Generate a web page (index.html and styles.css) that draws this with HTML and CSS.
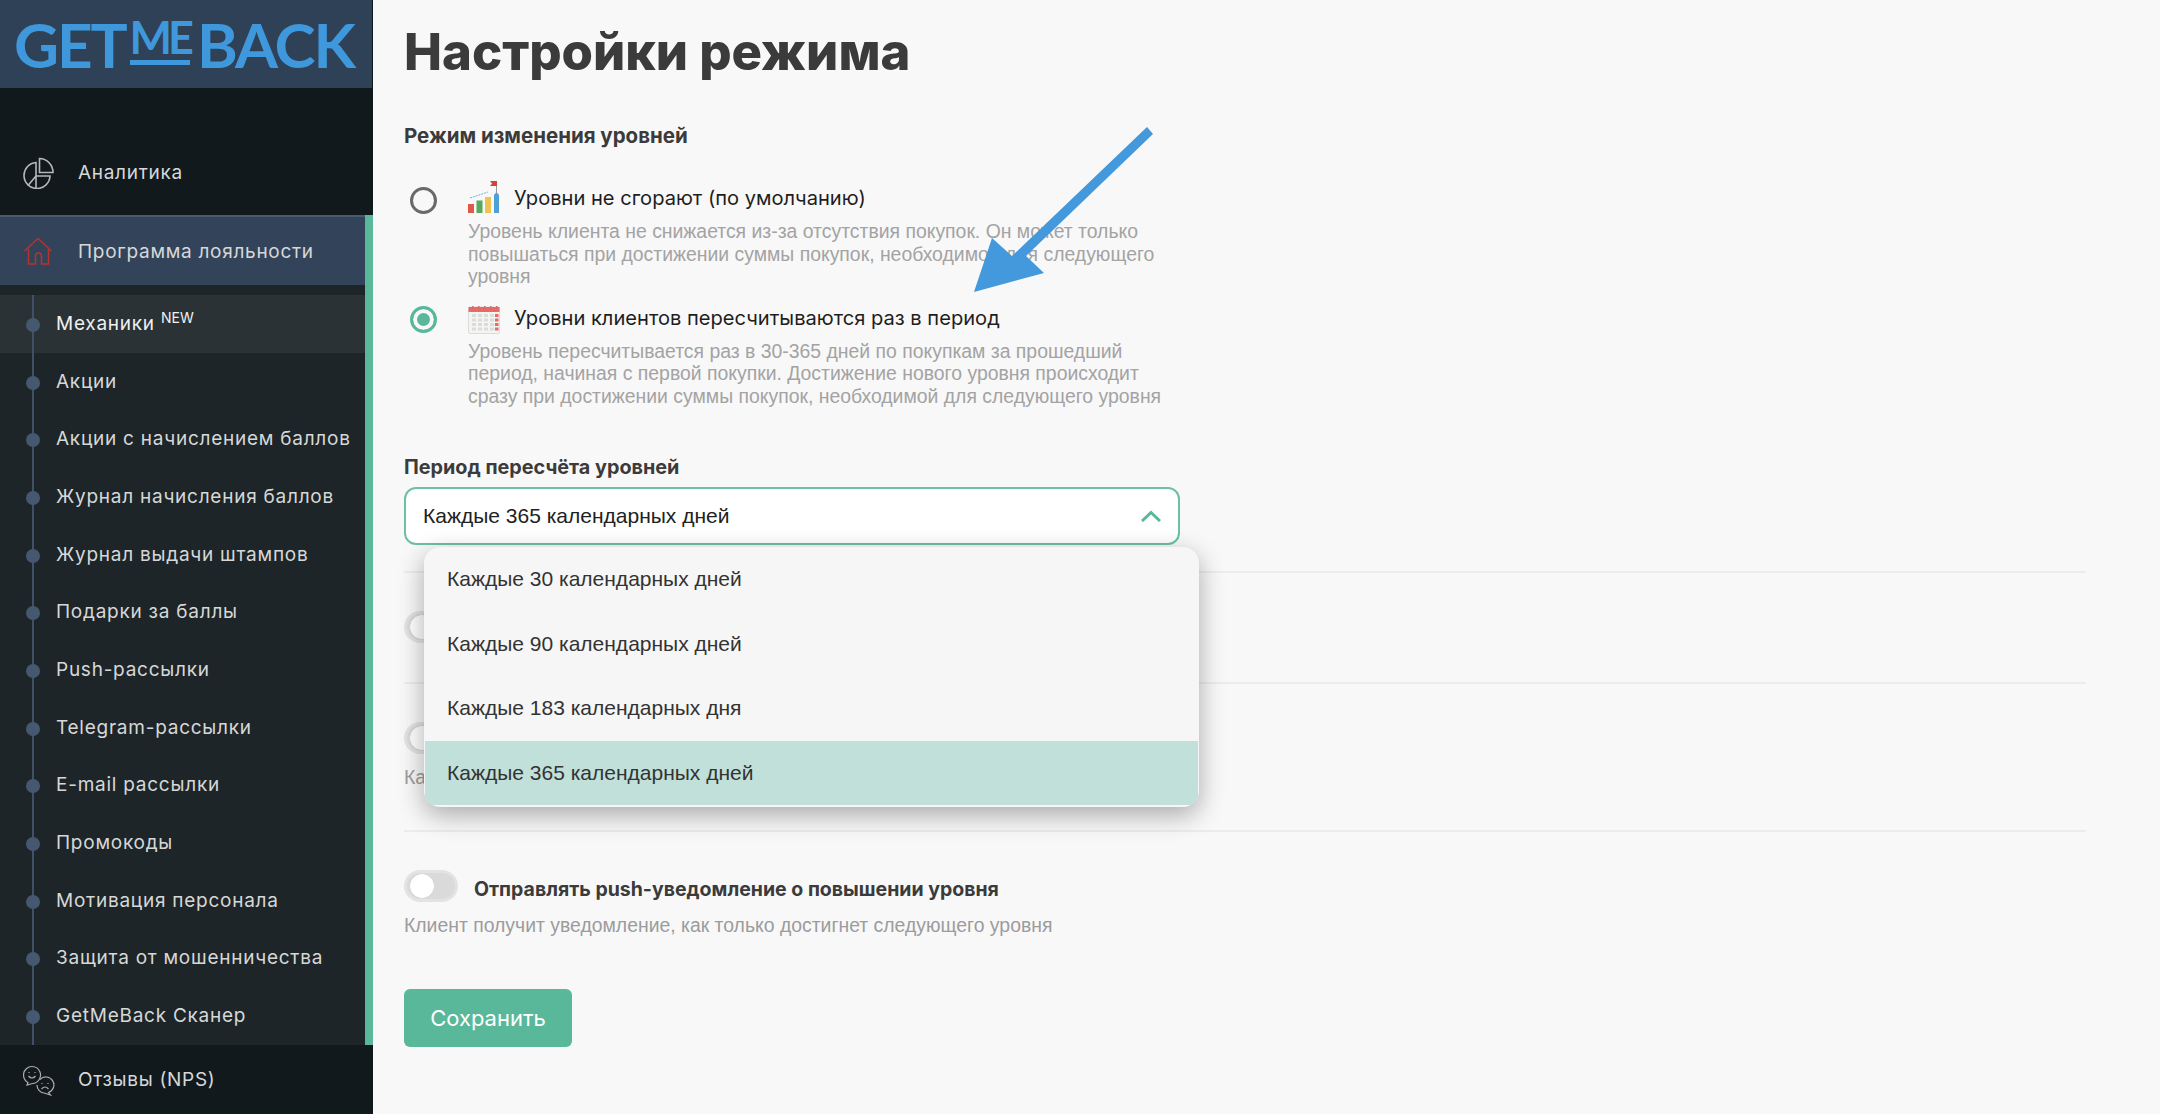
FILE: index.html
```html
<!DOCTYPE html>
<html lang="ru">
<head>
  <meta charset="UTF-8">
  <title>Настройки режима</title>
  <link rel="stylesheet" href="styles.css">
</head>
<body>
  <aside class="sidebar">
    <div class="logo">
      <span class="logo-big">GET</span>
      <span class="logo-me">ME</span>
      <span class="logo-big">BACK</span>
    </div>

    <a class="nav-item nav-first">
      <svg class="nav-icon" viewBox="0 0 32 32" fill="none" stroke="#b5b8b9" stroke-width="1.6">
        <path d="M16.5 1.5A14 14 0 0 1 30 15.5H16.5Z"/>
        <path d="M13 5.5A13 13 0 1 0 27 19H13Z"/>
        <path d="M13 19L5 28.5M13 19V31.5"/>
      </svg>
      <span>Аналитика</span>
    </a>

    <div class="nav-group">
      <a class="nav-item nav-active">
        <svg class="nav-icon" viewBox="0 0 32 32" fill="none" stroke="#b8322e" stroke-width="1.5">
          <path d="M1.5 16L15 3.5L28.5 16"/>
          <path d="M5.5 14V29H12.5V21A3 3 0 0 1 18.5 21V29H25.5V14"/>
        </svg>
        <span>Программа лояльности</span>
      </a>
      <ul class="sub-menu">
        <li class="sub-current">Механики <sup>NEW</sup></li>
        <li>Акции</li>
        <li>Акции с начислением баллов</li>
        <li>Журнал начисления баллов</li>
        <li>Журнал выдачи штампов</li>
        <li>Подарки за баллы</li>
        <li>Push-рассылки</li>
        <li>Telegram-рассылки</li>
        <li>E-mail рассылки</li>
        <li>Промокоды</li>
        <li>Мотивация персонала</li>
        <li>Защита от мошенничества</li>
        <li>GetMeBack Сканер</li>
      </ul>
    </div>

    <a class="nav-item nav-last">
      <svg class="nav-icon" viewBox="0 0 32 32" fill="none" stroke="#a9adae" stroke-width="1.2">
        <path d="M5 18.5A8.5 8.5 0 1 1 9.5 19.5L4 21Z"/>
        <path d="M5.5 12Q9 16 12.5 12M6 8V9M12 8V9"/>
        <path d="M17 15.5A8 8 0 1 1 25.5 28.5L27.5 31L21 29A8 8 0 0 1 14 21"/>
        <path d="M18.5 25Q22 21 25.5 25M19 19V20M25 19V20"/>
      </svg>
      <span>Отзывы (NPS)</span>
    </a>
  </aside>

  <main class="content">
    <h1>Настройки режима</h1>

    <h2 class="section-title">Режим изменения уровней</h2>

    <div class="option">
      <span class="radio"></span>
      <svg class="option-icon icon-chart" viewBox="0 0 32 32">
        <rect x="0" y="23" width="6" height="9" fill="#e2574c"/>
        <rect x="8.5" y="19.5" width="6" height="12.5" fill="#5aa85a"/>
        <rect x="17" y="16" width="6" height="16" fill="#f0c350"/>
        <path d="M26 32V14L28.5 11L31 14V32Z" fill="#4f9fd8"/>
        <path d="M2 17L20 11" stroke="#6bb0e4" stroke-width="1" stroke-dasharray="2 1" fill="none"/>
        <path d="M28.5 0V12" stroke="#999" stroke-width="1"/>
        <path d="M22 0H29V5H22L24 2.5Z" fill="#d9423a"/>
      </svg>
      <span class="option-label">Уровни не сгорают (по умолчанию)</span>
      <p class="option-desc">Уровень клиента не снижается из-за отсутствия покупок. Он может только<br>повышаться при достижении суммы покупок, необходимой для следующего<br>уровня</p>
    </div>

    <div class="option option-second">
      <span class="radio radio-on"></span>
      <svg class="option-icon" viewBox="0 0 32 28">
        <rect x="0.5" y="1" width="31" height="26.5" rx="1.5" fill="#f4f4f2" stroke="#dcdcda"/>
        <rect x="0.5" y="1" width="31" height="5" fill="#e86a66"/>
        <g fill="#c9706a"><rect x="4" y="0" width="1.5" height="3"/><rect x="10" y="0" width="1.5" height="3"/><rect x="16" y="0" width="1.5" height="3"/><rect x="22" y="0" width="1.5" height="3"/><rect x="28" y="0" width="1.5" height="3"/></g>
        <g fill="#dcdcda">
          <rect x="4" y="8" width="4" height="3"/><rect x="10" y="8" width="4" height="3"/><rect x="16" y="8" width="4" height="3"/><rect x="22" y="8" width="4" height="3"/>
          <rect x="4" y="12.5" width="4" height="3"/><rect x="10" y="12.5" width="4" height="3"/><rect x="16" y="12.5" width="4" height="3"/><rect x="22" y="12.5" width="4" height="3"/>
          <rect x="4" y="17" width="4" height="3"/><rect x="10" y="17" width="4" height="3"/><rect x="16" y="17" width="4" height="3"/><rect x="22" y="17" width="4" height="3"/>
          <rect x="4" y="21.5" width="4" height="3"/><rect x="10" y="21.5" width="4" height="3"/><rect x="16" y="21.5" width="4" height="3"/><rect x="22" y="21.5" width="4" height="3"/>
        </g>
        <g fill="#e86a66"><rect x="27" y="8" width="3.5" height="3"/><rect x="27" y="12.5" width="3.5" height="3"/><rect x="27" y="17" width="3.5" height="3"/><rect x="27" y="21.5" width="3.5" height="3"/></g>
      </svg>
      <span class="option-label">Уровни клиентов пересчитываются раз в период</span>
      <p class="option-desc">Уровень пересчитывается раз в 30-365 дней по покупкам за прошедший<br>период, начиная с первой покупки. Достижение нового уровня происходит<br>сразу при достижении суммы покупок, необходимой для следующего уровня</p>
    </div>

    <div class="field-title">Период пересчёта уровней</div>
    <div class="select-wrap">
      <div class="select-box">
        <span>Каждые 365 календарных дней</span>
        <svg class="chevron" viewBox="0 0 20 12" fill="none" stroke="#5ab89a" stroke-width="3"><path d="M1 11L10 2.5L19 11"/></svg>
      </div>
      <ul class="select-menu">
        <li>Каждые 30 календарных дней</li>
        <li>Каждые 90 календарных дней</li>
        <li>Каждые 183 календарных дня</li>
        <li class="selected">Каждые 365 календарных дней</li>
      </ul>
    </div>

    <div class="setting setting-a">
      <span class="toggle"></span>
    </div>
    <div class="setting setting-b">
      <span class="toggle"></span>
      <p class="setting-desc">Ка</p>
    </div>
    <div class="setting setting-c">
      <div class="toggle-row">
        <span class="toggle"></span>
        <span class="toggle-label">Отправлять push-уведомление о повышении уровня</span>
      </div>
      <p class="setting-desc">Клиент получит уведомление, как только достигнет следующего уровня</p>
    </div>

    <button class="save-btn">Сохранить</button>

    <svg class="arrow" viewBox="0 0 182 172">
      <path d="M173 2L179 9L52 131L70 148L0 167L18 113L38 131Z" fill="#4499dc"/>
    </svg>
  </main>
</body>
</html>
```

FILE: styles.css
```css
* {
  box-sizing: border-box;
}
html, body {
  height: 100%;
}
body {
  margin: 0;
  display: flex;
  overflow: hidden;
  background-color: #f8f8f8;
  font-family: "Liberation Sans", Arial, sans-serif;
}

/* sidebar */
.sidebar {
  width: 373px;
  flex: none;
  background-color: #11191c;
  font-family: Inter, sans-serif;
}
.logo {
  height: 88px;
  margin-right: 1px;
  padding: 7px 0 0 14px;
  display: flex;
  align-items: flex-start;
  background-color: #2f4156;
  color: #3f97dc;
  font-family: Lato, sans-serif;
  font-weight: 700;
}
.logo-big {
  font-size: 62px;
  line-height: 74px;
  letter-spacing: -2.1px;
}
.logo-me {
  margin: 12px 7px 0 4px;
  height: 46px;
  font-size: 45px;
  line-height: 37px;
  letter-spacing: -4px;
  border-bottom: 5px solid #3f97dc;
}
.nav-item {
  display: flex;
  align-items: center;
  color: #d6d8d8;
  font-size: 19px;
  letter-spacing: 0.7px;
}
.nav-first {
  height: 85px;
  margin-top: 42px;
}
.nav-icon {
  width: 32px;
  height: 32px;
  margin: 0 23px 0 23px;
  flex: none;
}
.nav-group {
  border-right: 8px solid #5ab89a;
  background-color: #1e2528;
}
.nav-active {
  height: 70px;
  border-top: 2px solid #4a5a6e;
  background-color: #33445a;
}
.sub-menu {
  list-style: none;
  margin: 0;
  padding: 10px 0 0;
}
.sub-menu li {
  position: relative;
  height: 57.67px;
  padding-left: 56px;
  color: #d6d8d8;
  font-size: 19px;
  letter-spacing: 0.75px;
  line-height: 58px;
  white-space: nowrap;
}
.sub-menu li::before {
  content: "";
  position: absolute;
  left: 31.5px;
  top: 0;
  bottom: 0;
  width: 2px;
  background-color: #3f5167;
}
.sub-menu li::after {
  content: "";
  position: absolute;
  left: 25.5px;
  top: 23px;
  width: 14px;
  height: 14px;
  border-radius: 50%;
  background-color: #45586f;
}
.sub-menu .sub-current {
  background-color: #2b3235;
  color: #f0f0f0;
  line-height: 57px;
}
.sub-menu sup {
  font-size: 14px;
  line-height: 0;
  vertical-align: 7px;
  letter-spacing: 0;
}
.nav-last {
  height: 70px;
}

/* main column */
.content {
  position: relative;
  flex: 1;
  padding-left: 31px;
  padding-right: 74px;
  color: #3b3b3b;
}
h1 {
  margin: 0;
  font-family: Inter, sans-serif;
  font-size: 50.8px;
  font-weight: 800;
  line-height: 104px;
}
.section-title,
.field-title {
  margin: 20px 0 0;
  font-family: Inter, sans-serif;
  font-size: 20.5px;
  font-weight: 700;
  line-height: 24px;
}
.option {
  margin-top: 36px;
  display: grid;
  grid-template-columns: 64px 46px 1fr;
  align-items: center;
}
.option-second {
  margin-top: 16px;
}
.radio {
  width: 27px;
  height: 27px;
  margin-left: 6px;
  border: 3px solid #6a6a6a;
  border-radius: 50%;
}
.radio-on {
  border-color: #5ab89a;
  background-color: #5ab89a;
  box-shadow: inset 0 0 0 4px #f8f8f8;
}
.option-icon {
  width: 32px;
  height: 32px;
}
.icon-chart {
  margin: -3px 0 3px;
}
.option-label {
  padding-bottom: 4px;
  color: #1e1e1e;
  font-family: Inter, sans-serif;
  font-size: 20.1px;
  line-height: 26px;
  white-space: nowrap;
}
.option-desc {
  grid-column: 2 / 4;
  margin: 4px 0 0;
  color: #a3a3a3;
  font-size: 19.4px;
  line-height: 22.5px;
  white-space: nowrap;
}
.field-title {
  margin-top: 48px;
  font-size: 19.8px;
}
.select-wrap {
  position: relative;
  margin-top: 8px;
}
.select-box {
  width: 776px;
  height: 58px;
  padding: 0 17px 0 17px;
  display: flex;
  align-items: center;
  justify-content: space-between;
  border: 2px solid #6cc0a6;
  border-radius: 12px;
  background-color: #fff;
  color: #222;
  font-size: 21px;
}
.chevron {
  width: 20px;
  height: 12px;
}
.select-menu {
  position: absolute;
  z-index: 2;
  left: 20px;
  top: 60px;
  width: 775px;
  height: 260px;
  list-style: none;
  margin: 0;
  padding: 0 1px 2px;
  overflow: hidden;
  border-radius: 16px;
  background-color: #f6f6f6;
  box-shadow: 0 8px 26px rgba(0, 0, 0, 0.32);
  color: #333;
  font-size: 21px;
}
.select-menu li {
  height: 64.5px;
  padding-left: 22px;
  line-height: 64.5px;
}
.select-menu .selected {
  background-color: #c0e0d9;
}
.setting {
  border-top: 2px solid #ececec;
}
.setting-a {
  margin-top: 26px;
  height: 111px;
  padding-top: 38px;
}
.setting-b {
  height: 148px;
  padding-top: 38px;
}
.setting-c {
  padding-top: 38px;
}
.toggle {
  display: block;
  flex: none;
  width: 54px;
  height: 32px;
  border: 3px solid #e3e3e3;
  border-radius: 16px;
  background-color: #dadada;
  background-image: radial-gradient(circle at 15px 13px, #fff 11.5px, transparent 12px);
}
.toggle-row {
  display: flex;
  align-items: center;
  gap: 16px;
}
.toggle-label {
  padding-top: 5px;
  font-family: Inter, sans-serif;
  font-size: 19.5px;
  font-weight: 700;
}
.setting-desc {
  margin: 11px 0 0;
  color: #9c9c9c;
  font-size: 19.4px;
  line-height: 24px;
}
.save-btn {
  display: block;
  margin-top: 52px;
  width: 168px;
  height: 58px;
  border: none;
  border-radius: 6px;
  background-color: #5ab89a;
  color: #fff;
  font-family: Inter, sans-serif;
  font-size: 22px;
}
.arrow {
  position: absolute;
  left: 601px;
  top: 125px;
  width: 182px;
  height: 172px;
}
```
